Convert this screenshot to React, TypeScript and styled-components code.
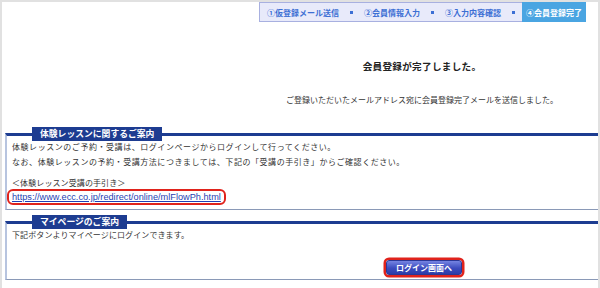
import React from "react";
import styled, { createGlobalStyle } from "styled-components";

const GlobalStyle = createGlobalStyle`
  html, body {
    margin: 0;
    padding: 0;
    background: #ffffff;
  }
  body {
    font-family: "Noto Sans CJK JP", "Noto Sans", sans-serif;
    color: #333333;
  }
`;

const Frame = styled.div`
  box-sizing: border-box;
  width: 600px;
  height: 288px;
  overflow: hidden;
  border: 2px solid #e1e1e1;
  border-bottom: none;
  background: #ffffff;
`;

const StepBar = styled.div`
  display: flex;
  justify-content: flex-end;
  padding-right: 12px;
`;

const Steps = styled.ol`
  display: flex;
  align-items: stretch;
  height: 20px;
  margin: 0;
  padding: 0 0 0 3px;
  list-style: none;
  box-sizing: border-box;
  background: #e8eafa;
  border: 1px solid #a8b0e0;
  border-right: none;
`;

interface IStep {
  active?: boolean;
}

const Step = styled.li<IStep>`
  display: flex;
  align-items: center;
  padding: 0 4px;
  font-size: 8px;
  font-weight: bold;
  color: ${({ active }) => (active ? "#ffffff" : "#3c6fd4")};
  background: ${({ active }) => (active ? "#4aa5e2" : "transparent")};
  margin-top: ${({ active }) => (active ? "-1px" : "0")};
  margin-bottom: ${({ active }) => (active ? "-1px" : "0")};
`;

const Dot = styled.li`
  display: flex;
  align-items: center;
  padding: 0 7px;

  &::before {
    content: "";
    width: 3px;
    height: 3px;
    background: #3c6fd4;
  }
`;

const Message = styled.div`
  padding: 37px 0 0 244px;
  text-align: center;
`;

const Title = styled.h1`
  margin: 0;
  font-size: 9.6px;
  line-height: 14px;
  font-weight: bold;
  letter-spacing: 0.3px;
  color: #222222;
`;

const Lead = styled.p`
  margin: 20px 0 0;
  font-size: 8px;
  line-height: 14px;
`;

const Section = styled.fieldset<{ gap: number }>`
  margin: ${({ gap }) => gap}px 0 0 3px;
  padding: 0 8px 4px 5px;
  min-width: 0;
  border: none;
  border-top: 3px solid #1d3c91;
  border-left: 2px solid #b7c4df;
  border-bottom: 1px solid #8a99b7;
`;

const Legend = styled.legend`
  margin-left: 20px;
  padding: 0 8px;
  height: 14px;
  line-height: 14px;
  font-size: 8.8px;
  font-weight: bold;
  color: #ffffff;
  background: #1d3c91;
`;

interface IPara {
  tight?: boolean;
  wide?: boolean;
}

const Para = styled.p<IPara>`
  margin: ${({ tight }) => (tight ? "7px 0 0" : "-2px 0 0")};
  font-size: 8px;
  letter-spacing: ${({ wide }) => (wide ? "0.55px" : "0.1px")};
  line-height: ${({ tight }) => (tight ? "13px" : "15px")};
`;

const LinkBox = styled.span`
  display: inline-block;
  margin-left: -5px;
  padding: 0 3px;
  border: 2px solid #e0231c;
  border-radius: 6px;
  line-height: 11px;
`;

const Link = styled.a`
  font-family: "Liberation Sans", Arial, sans-serif;
  font-size: 9.2px;
  letter-spacing: 0;
  color: #1f3fb3;
  text-decoration: underline;
`;

const ButtonRow = styled.div`
  display: flex;
  justify-content: center;
  padding: 18px 0 0 246px;
`;

const LoginButton = styled.button`
  width: 76px;
  height: 15px;
  padding: 0;
  font-family: inherit;
  font-size: 8px;
  font-weight: bold;
  color: #ffffff;
  cursor: pointer;
  border: 1px solid #2b3796;
  border-radius: 3px;
  background: linear-gradient(#7584e2, #3c4cbf 55%, #2d3da8);
  box-shadow: 0 0 0 2.5px #e0231c;
`;

const steps = ["①仮登録メール送信", "②会員情報入力", "③入力内容確認", "④会員登録完了"];

const App: React.FC = () => (
  <>
    <GlobalStyle />
    <Frame>
      <StepBar>
        <Steps>
          {steps.map((s, i) => (
            <React.Fragment key={s}>
              {i > 0 && <Dot />}
              <Step active={i === steps.length - 1}>{s}</Step>
            </React.Fragment>
          ))}
        </Steps>
      </StepBar>

      <Message>
        <Title>会員登録が完了しました。</Title>
        <Lead>ご登録いただいたメールアドレス宛に会員登録完了メールを送信しました。</Lead>
      </Message>

      <Section gap={20}>
        <Legend>体験レッスンに関するご案内</Legend>
        <Para wide>
          体験レッスンのご予約・受講は、ログインページからログインして行ってください。
          <br />
          なお、体験レッスンの予約・受講方法につきましては、下記の「受講の手引き」からご確認ください。
        </Para>
        <Para tight>
          ＜体験レッスン受講の手引き＞
          <br />
          <LinkBox>
            <Link href="#">https://www.ecc.co.jp/redirect/online/mlFlowPh.html</Link>
          </LinkBox>
        </Para>
      </Section>

      <Section gap={5}>
        <Legend>マイページのご案内</Legend>
        <Para>下記ボタンよりマイページにログインできます。</Para>
        <ButtonRow>
          <LoginButton>ログイン画面へ</LoginButton>
        </ButtonRow>
      </Section>
    </Frame>
  </>
);

export default App;
